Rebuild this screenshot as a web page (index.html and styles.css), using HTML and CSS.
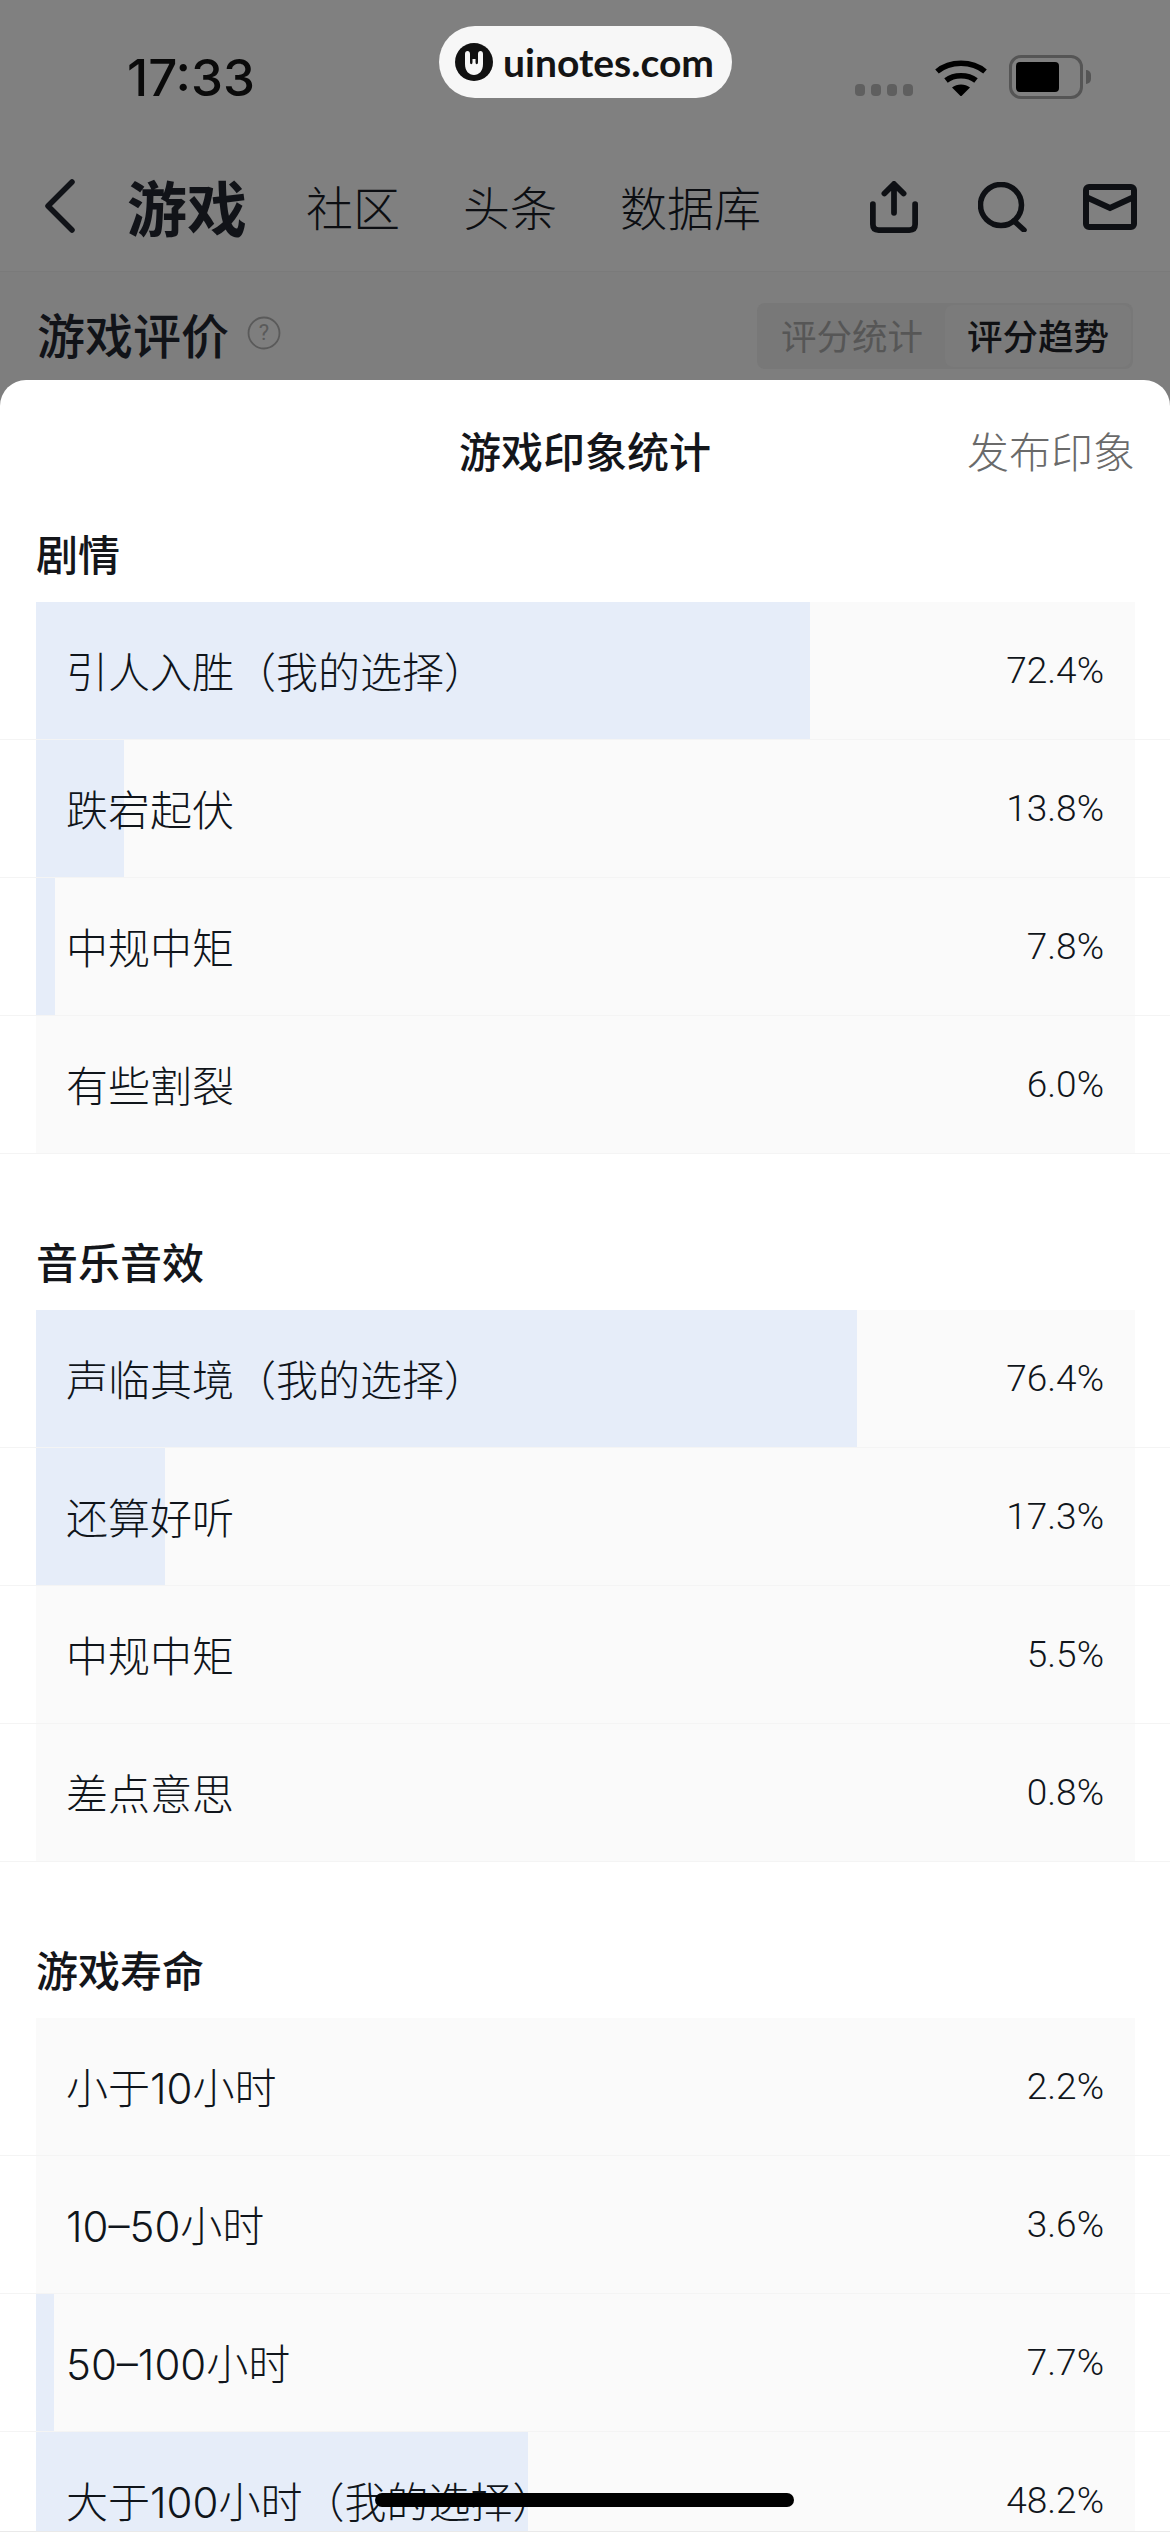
FILE: index.html
```html
<!DOCTYPE html>
<html lang="zh-CN">
<head>
    <meta charset="UTF-8">
    <meta name="viewport" content="width=device-width, initial-scale=1.0">
    <title>游戏印象统计</title>
    <link rel="stylesheet" href="styles.css">
</head>
<body>
    <div class="screen">
        <div class="status-bar">
            <span class="time">17:33</span>
            <div class="status-icons">
                <div class="signal"><i></i><i></i><i></i><i></i></div>
                <svg class="wifi" width="52" height="38" viewBox="0 0 52 38">
                    <path d="M2 13.500C15 2.500 37 2.500 50 13.500" fill="none" stroke="#000" stroke-width="5.500"/>
                    <path d="M11 22.500C19 16 33 16 41 22.500" fill="none" stroke="#000" stroke-width="5.500"/>
                    <path d="M17 29.500C22 25.500 30 25.500 35 29.500L26 38.500Z" fill="#000"/>
                </svg>
                <div class="battery"><div class="battery-level"></div></div>
                <div class="battery-cap"></div>
            </div>
        </div>

        <div class="watermark">
            <svg width="38" height="38" viewBox="0 0 38 38">
                <circle cx="19" cy="19" r="19" fill="#111"/>
                <path d="M10 11C10 9 11 8 12.500 8C14 8 15 9 15 11V19C15 22 17.500 22 17.500 19V16H20.500V19C20.500 22 23 22 23 19V11C23 9 24 8 25.500 8C27 8 28 9 28 11V21C28 28 24 32 19 32C14 32 10 28 10 21Z" fill="#f7f7f7"/>
            </svg>
            <span>uinotes.com</span>
        </div>

        <nav class="nav">
            <svg class="back" width="30" height="54" viewBox="0 0 30 54">
                <path d="M27 3L3 27L27 51" fill="none" stroke="#111318" stroke-width="5.500" stroke-linecap="round" stroke-linejoin="round"/>
            </svg>
            <span class="nav-current">游戏</span>
            <span class="nav-tab">社区</span>
            <span class="nav-tab">头条</span>
            <span class="nav-tab">数据库</span>
            <div class="nav-icons">
                <svg class="icon-share" width="48" height="52" viewBox="0 0 50 54">
                    <path d="M3 24V45C3 49 5 51 9 51H41C45 51 47 49 47 45V24" fill="none" stroke="#0e1014" stroke-width="6" stroke-linecap="round"/>
                    <path d="M25 33V4M15 13L25 3L35 13" fill="none" stroke="#0e1014" stroke-width="6" stroke-linecap="round" stroke-linejoin="round"/>
                </svg>
                <svg width="50" height="50" viewBox="0 0 50 50">
                    <circle cx="23" cy="23" r="20.500" fill="none" stroke="#0e1014" stroke-width="5.500"/>
                    <path d="M36 39L46 48" fill="none" stroke="#0e1014" stroke-width="5.500" stroke-linecap="round"/>
                </svg>
                <svg width="54" height="46" viewBox="0 0 54 46">
                    <rect x="3" y="3" width="48" height="40" rx="3" fill="none" stroke="#0e1014" stroke-width="6"/>
                    <path d="M3 13L27 24L51 13" fill="none" stroke="#0e1014" stroke-width="6"/>
                </svg>
            </div>
        </nav>

        <div class="sub-head">
            <h2 class="sub-title">游戏评价</h2>
            <svg class="help" width="34" height="34" viewBox="0 0 34 34">
                <circle cx="17" cy="17" r="15.500" fill="none" stroke="#5a5a5a" stroke-width="1.800"/>
                <text x="17" y="24" text-anchor="middle" class="help-mark">?</text>
            </svg>
            <div class="segment">
                <span class="segment-item">评分统计</span>
                <span class="segment-item segment-active">评分趋势</span>
            </div>
        </div>

        <div class="sheet">
            <div class="sheet-head">
                <h1 class="sheet-title">游戏印象统计</h1>
                <span class="sheet-action">发布印象</span>
            </div>

            <section class="group">
                <h3 class="group-title">剧情</h3>
                <div class="row"><div class="row-bar" style="background-size: 774px 100%"><span class="label">引人入胜（我的选择）</span><span class="pct">72.4%</span></div></div>
                <div class="row"><div class="row-bar" style="background-size: 88px 100%"><span class="label">跌宕起伏</span><span class="pct">13.8%</span></div></div>
                <div class="row"><div class="row-bar" style="background-size: 19px 100%"><span class="label">中规中矩</span><span class="pct">7.8%</span></div></div>
                <div class="row"><div class="row-bar"><span class="label">有些割裂</span><span class="pct">6.0%</span></div></div>
            </section>

            <section class="group">
                <h3 class="group-title">音乐音效</h3>
                <div class="row"><div class="row-bar" style="background-size: 821px 100%"><span class="label">声临其境（我的选择）</span><span class="pct">76.4%</span></div></div>
                <div class="row"><div class="row-bar" style="background-size: 129px 100%"><span class="label">还算好听</span><span class="pct">17.3%</span></div></div>
                <div class="row"><div class="row-bar"><span class="label">中规中矩</span><span class="pct">5.5%</span></div></div>
                <div class="row"><div class="row-bar"><span class="label">差点意思</span><span class="pct">0.8%</span></div></div>
            </section>

            <section class="group">
                <h3 class="group-title">游戏寿命</h3>
                <div class="row"><div class="row-bar"><span class="label">小于10小时</span><span class="pct">2.2%</span></div></div>
                <div class="row"><div class="row-bar"><span class="label">10–50小时</span><span class="pct">3.6%</span></div></div>
                <div class="row"><div class="row-bar" style="background-size: 18px 100%"><span class="label">50–100小时</span><span class="pct">7.7%</span></div></div>
                <div class="row"><div class="row-bar" style="background-size: 492px 100%"><span class="label">大于100小时（我的选择）</span><span class="pct">48.2%</span></div></div>
            </section>
        </div>

        <div class="home-bar"></div>
    </div>
</body>
</html>
```

FILE: styles.css
```css
body {
    margin: 0;
    background-color: #808080;
    font-family: "Noto Sans CJK SC", Roboto, sans-serif;
    color: #111318;
}

.screen {
    position: relative;
    width: 1170px;
    height: 2532px;
    overflow: hidden;
    background-color: #7e7e7e;
}

/* thin line along the very bottom of the capture */
.screen::after {
    content: "";
    position: absolute;
    left: 0;
    right: 0;
    bottom: 0;
    height: 1px;
    background-color: #e9e9e9;
}

/* status bar */
.status-bar {
    display: flex;
    align-items: center;
    height: 126px;
    padding: 14px 0 0 127px;
    background-color: #808080;
}

.time {
    font-family: Inter, Roboto, sans-serif;
    font-size: 51px;
    font-weight: 500;
    color: #0a0a0a;
}

.status-icons {
    display: flex;
    align-items: center;
    margin-left: auto;
    padding-right: 79px;
}

.signal {
    display: flex;
    gap: 6px;
    margin: 26px 22px 0 0;
}

.signal i {
    width: 10px;
    height: 12px;
    border-radius: 4px;
    background-color: #5f5f5f;
}

.wifi {
    margin-right: 22px;
}

.battery {
    box-sizing: border-box;
    width: 74px;
    height: 44px;
    padding: 4px;
    border: 3px solid #555;
    border-radius: 12px;
}

.battery-level {
    width: 43px;
    height: 30px;
    border-radius: 4px;
    background-color: #000;
}

.battery-cap {
    width: 5px;
    height: 14px;
    margin-left: 3px;
    border-radius: 0 6px 6px 0;
    background-color: #555;
}

.watermark {
    position: absolute;
    top: 26px;
    left: 439px;
    display: flex;
    align-items: center;
    gap: 10px;
    box-sizing: border-box;
    width: 293px;
    height: 72px;
    padding-left: 16px;
    border-radius: 36px;
    background-color: #f7f7f7;
    font-family: Lato, sans-serif;
    font-size: 39px;
    font-weight: 700;
    color: #141414;
}

/* nav */
.nav {
    display: flex;
    align-items: center;
    height: 131px;
    padding-left: 45px;
    border-bottom: 1px solid #7a7a7a;
    background-color: #808080;
}

.back {
    margin-right: 52px;
}

.nav-current {
    margin-right: 59px;
    font-size: 60px;
    font-weight: 700;
}

.nav-tab {
    margin-right: 63px;
    font-size: 47px;
    font-weight: 300;
    color: #0c0e12;
}

.nav-icons {
    display: flex;
    align-items: center;
    gap: 55px;
    margin-left: auto;
    padding: 3px 33px 0 0;
}

.icon-share {
    margin-right: 5px;
}

/* heading behind the sheet */
.sub-head {
    display: flex;
    align-items: center;
    height: 88px;
    padding: 20px 37px 0;
}

.sub-title {
    margin: 0 0 6px;
    font-size: 48px;
    font-weight: 500;
    color: #111318;
}

.help {
    margin: 0 0 6px 18px;
}

.help-mark {
    font-family: Roboto, sans-serif;
    font-size: 22px;
    fill: #5a5a5a;
}

.segment {
    display: flex;
    margin-left: auto;
    padding: 2px;
    border-radius: 8px;
    background-color: #787878;
}

.segment-item {
    padding: 0 22px;
    height: 62px;
    line-height: 60px;
    border-radius: 8px;
    font-size: 35.500px;
    color: #565656;
}

.segment-active {
    background-color: #7b7b7b;
    font-weight: 500;
    color: #101114;
}

/* bottom sheet */
.sheet {
    height: 2200px;
    border-radius: 26px 26px 0 0;
    background-color: #ffffff;
}

.sheet-head {
    display: flex;
    justify-content: center;
    align-items: center;
    position: relative;
    box-sizing: border-box;
    height: 145px;
    padding-bottom: 7px;
}

.sheet-title {
    margin: 0;
    font-size: 42px;
    font-weight: 500;
    color: #14161a;
}

.sheet-action {
    position: absolute;
    right: 35px;
    font-size: 42px;
    font-weight: 300;
    color: #6a6a6a;
}

.group + .group {
    margin-top: 79px;
}

.group-title {
    margin: 0 0 17px 36px;
    height: 60px;
    line-height: 56px;
    font-size: 42px;
    font-weight: 500;
    color: #14161a;
}

.row {
    padding: 0 35px 0 36px;
    border-bottom: 1px solid #f4f4f4;
}

.row-bar {
    display: flex;
    justify-content: space-between;
    align-items: center;
    box-sizing: border-box;
    height: 137px;
    padding: 0 31px 2px 30px;
    background: #fafafa linear-gradient(#e6edf9, #e6edf9) no-repeat left top;
    background-size: 0 100%;
}

.label {
    font-family: Inter, "Noto Sans CJK SC", sans-serif;
    font-size: 42px;
    font-weight: 300;
    color: #10151b;
}

.pct {
    margin-top: 2px;
    font-family: Roboto, sans-serif;
    font-size: 37px;
    font-weight: 300;
    color: #10151b;
}

.home-bar {
    position: absolute;
    left: 375px;
    top: 2493px;
    width: 419px;
    height: 14px;
    border-radius: 7px;
    background-color: #000;
}
```
